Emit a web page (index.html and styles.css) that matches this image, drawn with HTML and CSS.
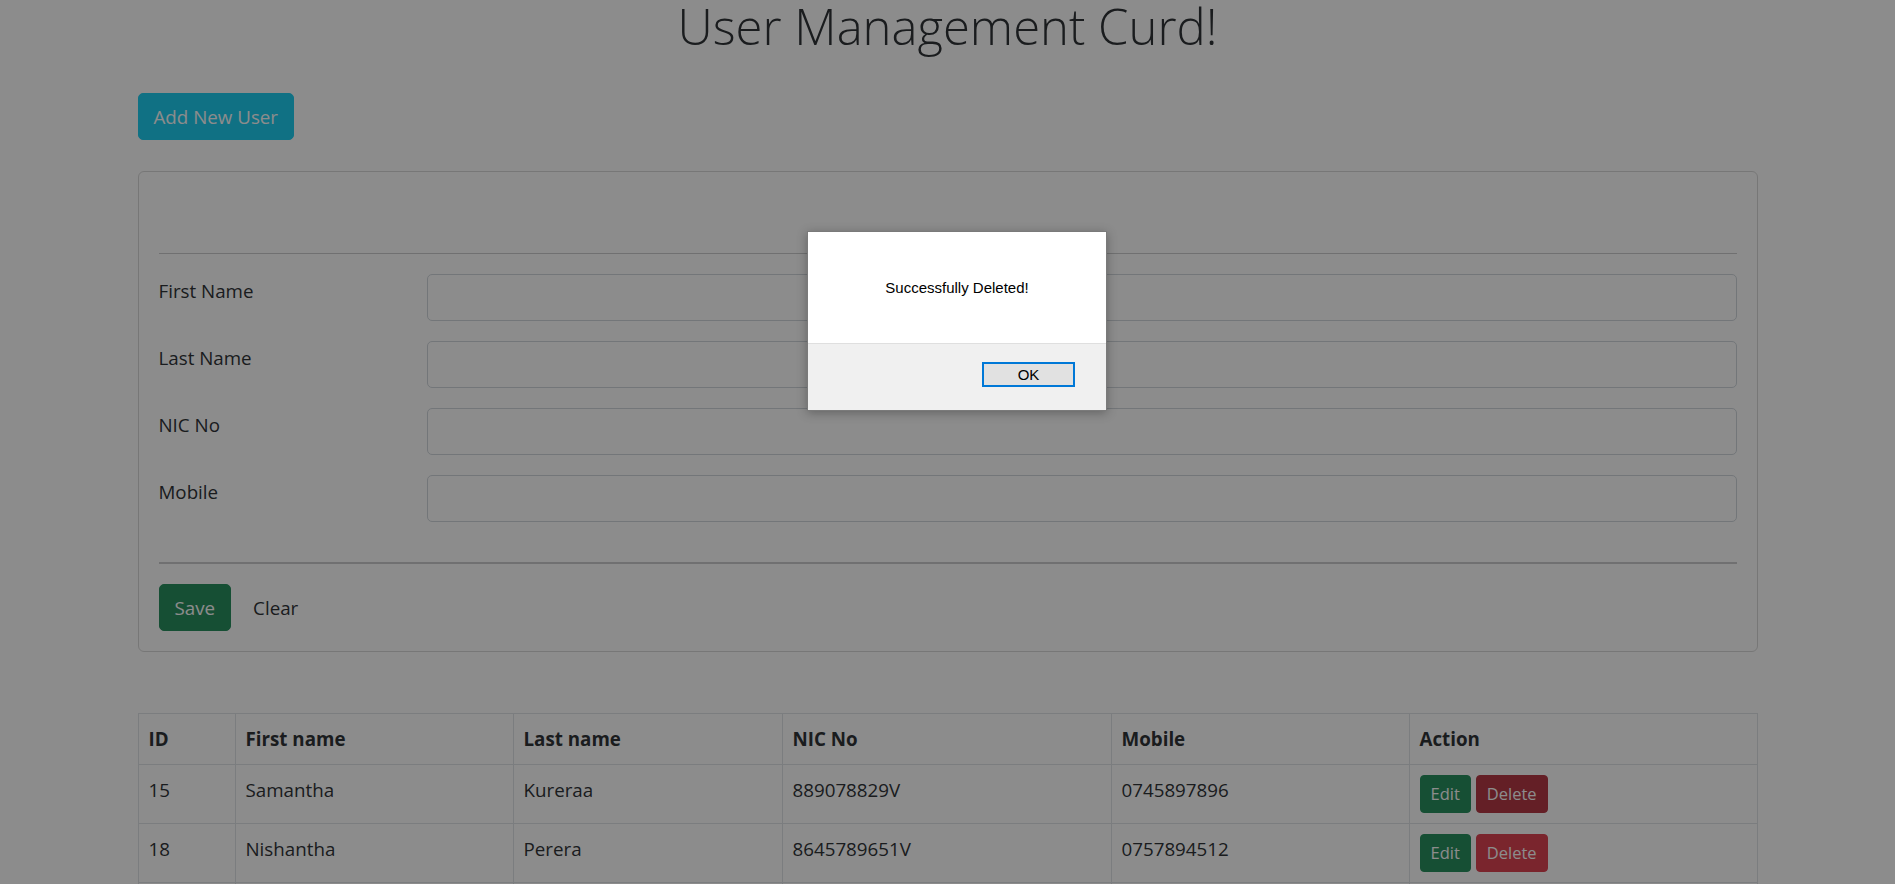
FILE: index.html
```html
<!DOCTYPE html>
<html lang="en">
<head>
<meta charset="utf-8">
<title>User Management Curd!</title>
<link rel="stylesheet" href="styles.css">
</head>
<body>
<div class="container">
  <h1 class="title">User Management Curd!</h1>
  <div class="top-actions">
    <button class="btn btn-info">Add New User</button>
  </div>

  <div class="card">
    <div class="card-head"></div>
    <hr class="rule">
    <div class="fields">
      <div class="form-row">
        <label class="form-label">First Name</label>
        <input class="form-control" type="text">
      </div>
      <div class="form-row">
        <label class="form-label">Last Name</label>
        <input class="form-control" type="text">
      </div>
      <div class="form-row">
        <label class="form-label">NIC No</label>
        <input class="form-control" type="text">
      </div>
      <div class="form-row">
        <label class="form-label">Mobile</label>
        <input class="form-control" type="text">
      </div>
    </div>
    <hr class="rule rule-thick">
    <div class="form-actions">
      <button class="btn btn-success">Save</button>
      <button class="btn btn-plain">Clear</button>
    </div>
  </div>

  <table class="users">
    <thead>
      <tr>
        <th class="c-id">ID</th>
        <th class="c-first">First name</th>
        <th class="c-last">Last name</th>
        <th class="c-nic">NIC No</th>
        <th class="c-mobile">Mobile</th>
        <th class="c-action">Action</th>
      </tr>
    </thead>
    <tbody>
      <tr>
        <td>15</td>
        <td>Samantha</td>
        <td>Kureraa</td>
        <td>889078829V</td>
        <td>0745897896</td>
        <td><div class="row-actions"><button class="btn btn-sm btn-success">Edit</button><button class="btn btn-sm btn-danger is-active">Delete</button></div></td>
      </tr>
      <tr>
        <td>18</td>
        <td>Nishantha</td>
        <td>Perera</td>
        <td>8645789651V</td>
        <td>0757894512</td>
        <td><div class="row-actions"><button class="btn btn-sm btn-success">Edit</button><button class="btn btn-sm btn-danger">Delete</button></div></td>
      </tr>
      <tr>
        <td>&nbsp;</td>
        <td>&nbsp;</td>
        <td>&nbsp;</td>
        <td>&nbsp;</td>
        <td>&nbsp;</td>
        <td>&nbsp;</td>
      </tr>
    </tbody>
  </table>
</div>

<div class="overlay">
  <div class="dialog">
    <div class="dialog-body">Successfully Deleted!</div>
    <div class="dialog-foot">
      <button class="dialog-btn">OK</button>
    </div>
  </div>
</div>
</body>
</html>
```

FILE: styles.css
```css
html, body {
  overflow: hidden;
}

body {
  margin: 0;
  background: #ffffff;
  color: #212529;
  font-family: "Open Sans", "Noto Sans", sans-serif;
  font-size: 18.75px;
  line-height: 30px;
}

.container {
  width: 1620px;
  margin: 0 auto;
}

.title {
  margin: 0;
  padding-top: 2px;
  font-size: 49px;
  line-height: 48px;
  font-weight: 300;
  text-align: center;
}

.top-actions {
  margin-top: 43px;
}

.btn {
  display: inline-block;
  box-sizing: border-box;
  padding: 7.5px 15px;
  border: 1px solid transparent;
  border-radius: 5px;
  font-family: inherit;
  font-size: 18.75px;
  line-height: 30px;
  color: #212529;
  background: transparent;
  cursor: pointer;
}

.btn-info {
  background: #0dcaf0;
  border-color: #0dcaf0;
  color: #ffffff;
}

.btn-success {
  background: #198754;
  border-color: #198754;
  color: #ffffff;
}

.btn-danger {
  background: #dc3545;
  border-color: #dc3545;
  color: #ffffff;
}

.btn-danger.is-active {
  background: #b02a37;
  border-color: #b02a37;
}

.btn-sm {
  padding: 5px 10px;
  font-size: 16.5px;
  line-height: 26px;
  border-radius: 4px;
}

.card {
  margin-top: 31px;
  border: 1px solid #d6d6d6;
  border-radius: 6px;
  padding: 20px;
}

.card-head {
  height: 41px;
}

.rule {
  margin: 20px 0;
  border: 0;
  border-top: 1px solid #c8c9ca;
}

.rule-thick {
  border-top: 2px solid #c8c9ca;
}

.fields {
  display: flex;
  flex-direction: column;
  gap: 20px;
  padding-bottom: 20px;
}

.form-row {
  display: grid;
  grid-template-columns: 238px 1fr;
  column-gap: 30px;
}

.form-label {
  display: block;
  padding-top: 2px;
}

.form-control {
  box-sizing: border-box;
  display: block;
  width: 100%;
  height: 47px;
  margin: 0;
  padding: 7.5px 15px;
  border: 1px solid #ced4da;
  border-radius: 5px;
  font-family: inherit;
  font-size: 18.75px;
  background: #ffffff;
}

.form-actions {
  display: flex;
  gap: 6px;
}

.users {
  margin-top: 61px;
  width: 1620px;
  border-collapse: collapse;
  table-layout: fixed;
  border: 1px solid #dee2e6;
}

.users th,
.users td {
  border: 1px solid #dee2e6;
  padding: 10px;
  text-align: left;
  vertical-align: top;
}

.users th {
  font-weight: 700;
}

.c-id { width: 76px; }
.c-first { width: 257px; }
.c-last { width: 248px; }
.c-nic { width: 308px; }
.c-mobile { width: 277px; }
.c-action { width: auto; }

.row-actions {
  display: flex;
  gap: 5px;
}

.overlay {
  position: fixed;
  inset: 0;
  background: rgba(20, 20, 20, 0.49);
}

.dialog {
  position: absolute;
  left: 807px;
  top: 231px;
  width: 300px;
  height: 180px;
  box-sizing: border-box;
  border: 1px solid #7a7a7a;
  box-shadow: 0 2px 10px rgba(0, 0, 0, 0.3);
  display: flex;
  flex-direction: column;
  font-family: "Liberation Sans", Arial, sans-serif;
  color: #000000;
}

.dialog-body {
  height: 111px;
  background: #ffffff;
  display: flex;
  align-items: center;
  justify-content: center;
  font-size: 15px;
  line-height: 18px;
}

.dialog-foot {
  flex: 1;
  background: #f0f0f0;
  border-top: 1px solid #dfdfdf;
  display: flex;
  justify-content: flex-end;
  align-items: flex-start;
  padding: 18px 31px 0 0;
}

.dialog-btn {
  box-sizing: border-box;
  width: 93px;
  height: 25px;
  border: 2px solid #0078d7;
  background: #e1e1e1;
  font-family: "Liberation Sans", Arial, sans-serif;
  font-size: 15px;
  color: #000000;
  padding: 0;
}
```
